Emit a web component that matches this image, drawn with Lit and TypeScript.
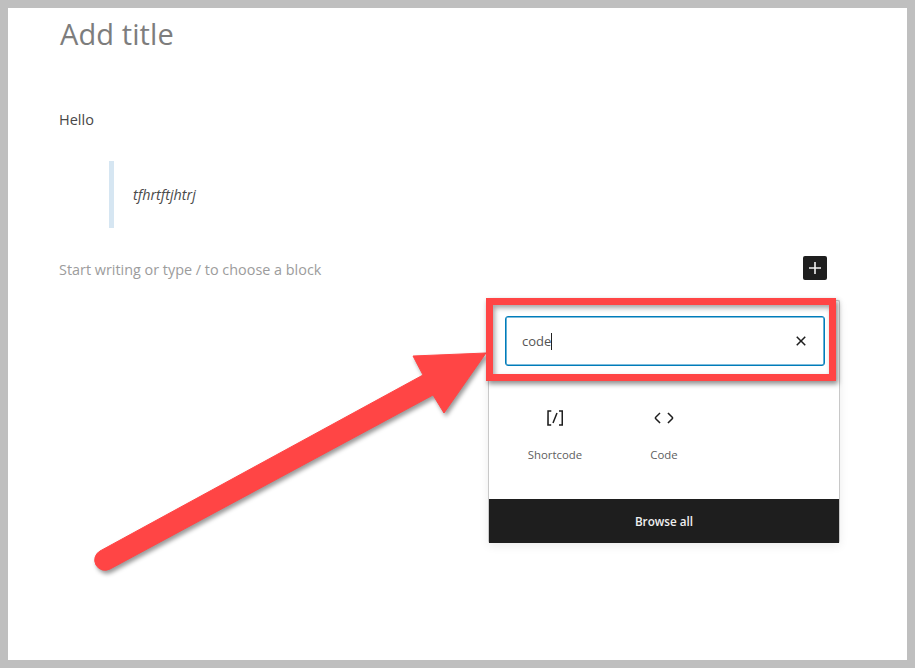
import { LitElement, html, css, svg } from "lit";
import { customElement } from "lit/decorators.js";

const ICONS = {
  plus: "M18 11.2h-5.2V6h-1.6v5.2H6v1.6h5.2V18h1.6v-5.2H18z",
  close: "M12 13.06l3.712 3.713 1.061-1.06L13.061 12l3.712-3.712-1.06-1.06L12 10.938 8.288 7.227l-1.061 1.06L10.939 12l-3.712 3.712 1.06 1.061L12 13.061z",
  shortcode: "M16 4.2v1.5h2.5v12.5H16v1.5h4V4.2h-4zM4.2 19.8h4v-1.5H5.8V5.8h2.5V4.2h-4l-.1 15.6zm5.1-3.1l1.4.6 4-10-1.4-.6-4 10z",
  code: "M20.8 10.7l-4.3-4.3-1.1 1.1 4.3 4.3c.1.1.1.3 0 .4l-4.3 4.3 1.1 1.1 4.3-4.3c.7-.8.7-1.9 0-2.6zM4.2 11.8l4.3-4.3-1-1-4.3 4.3c-.7.7-.7 1.8 0 2.5l4.3 4.3 1.1-1.1-4.3-4.3c-.2-.1-.2-.3-.1-.4z",
};

const icon = (d: string) =>
  html`<svg class="icon" viewBox="0 0 24 24" width="24" height="24" fill="currentColor">${svg`<path d=${d}></path>`}</svg>`;

@customElement("app-root")
export class AppRoot extends LitElement {
  static styles = css`
    :host {
      display: block;
      width: 915px;
      height: 668px;
      font-family: "Open Sans", "Noto Sans", sans-serif;
    }
    .frame {
      position: relative;
      box-sizing: border-box;
      width: 915px;
      height: 668px;
      border: 8px solid #bfbfbf;
      background: #fff;
      overflow: hidden;
      display: flex;
      flex-direction: column;
      padding: 0 80px 0 51px;
    }
    .title {
      margin: 7px 0 0 1px;
      font-size: 29px;
      line-height: 38px;
      font-weight: 400;
      color: #7d7d7d;
      letter-spacing: 0.1px;
    }
    .hello {
      margin: 55px 0 0;
      font-size: 14.5px;
      line-height: 24px;
      color: #484848;
    }
    .quote {
      margin: 29px 0 0 50px;
      height: 67px;
      border-left: 5px solid #d6e6f2;
      padding-left: 19px;
      display: flex;
      align-items: center;
      font-style: italic;
      font-size: 14.3px;
      color: #4a4a4a;
    }
    .placeholder-row {
      margin-top: 28px;
      display: flex;
      align-items: center;
      justify-content: space-between;
      height: 24px;
    }
    .placeholder {
      padding-top: 2px;
      font-size: 14.4px;
      color: #9c9c9c;
    }
    .add {
      width: 24px;
      height: 24px;
      border-radius: 2px;
      background: #1e1e1e;
      color: #f0f0f0;
      display: flex;
    }
    .popup {
      position: absolute;
      left: 480px;
      top: 292px;
      width: 352px;
      height: 243px;
      box-sizing: border-box;
      background: #fff;
      border: 1px solid #c8c8c8;
      border-bottom: 0;
      border-radius: 2px;
      box-shadow: 0 3px 10px rgba(0, 0, 0, 0.08);
      display: flex;
      flex-direction: column;
    }
    .search {
      margin: 15px 14px 0 16px;
      height: 50px;
      box-sizing: border-box;
      border: 1px solid #007cba;
      box-shadow: inset 0 0 0 0.6px #007cba;
      border-radius: 3px;
      display: flex;
      align-items: center;
      justify-content: space-between;
      padding: 0 11px 0 16px;
      font-size: 13px;
      color: #555;
    }
    .typed {
      display: flex;
      align-items: center;
    }
    .caret {
      width: 1px;
      height: 17px;
      background: #222;
    }
    .search .icon {
      color: #1e1e1e;
    }
    .results {
      display: grid;
      grid-template-columns: repeat(3, 109px);
      padding: 40px 0 0 11.5px;
      flex: 1;
      align-content: start;
    }
    .item {
      display: flex;
      flex-direction: column;
      align-items: center;
      gap: 17px;
      font-size: 11.4px;
      line-height: 16px;
      color: #606060;
    }
    .item .icon {
      color: #1e1e1e;
    }
    .browse {
      height: 44px;
      background: #1e1e1e;
      color: #f0f0f0;
      display: flex;
      align-items: center;
      justify-content: center;
      font-size: 11.7px;
      font-weight: 600;
    }
    .highlight {
      position: absolute;
      left: 478px;
      top: 290px;
      width: 350px;
      height: 83px;
      box-sizing: border-box;
      border: 7px solid #ff4545;
      box-shadow: 2px 3px 5px rgba(0, 0, 0, 0.45), inset 2px 3px 5px rgba(0, 0, 0, 0.35);
    }
    .arrow {
      position: absolute;
      left: -8px;
      top: -8px;
      filter: drop-shadow(2px 3px 2px rgba(0, 0, 0, 0.4));
    }
  `;

  render() {
    return html`
      <div class="frame">
        <h1 class="title">Add title</h1>
        <p class="hello">Hello</p>
        <blockquote class="quote">tfhrtftjhtrj</blockquote>
        <div class="placeholder-row">
          <span class="placeholder">Start writing or type / to choose a block</span>
          <span class="add">${icon(ICONS.plus)}</span>
        </div>
        <div class="popup">
          <div class="search">
            <span class="typed">code<span class="caret"></span></span>
            ${icon(ICONS.close)}
          </div>
          <div class="results">
            <div class="item">${icon(ICONS.shortcode)}<span>Shortcode</span></div>
            <div class="item">${icon(ICONS.code)}<span>Code</span></div>
          </div>
          <div class="browse">Browse all</div>
        </div>
        <svg class="arrow" width="915" height="668" viewBox="0 0 915 668">
          <path fill="#ff4545" stroke="#ff4545" stroke-linejoin="round" stroke-width="1"
            d="M486 353 L413 356 L423 375 L100 551 A10 10 0 0 0 110 569 L433 395 L444 413 Z"></path>
        </svg>
        <div class="highlight"></div>
      </div>
    `;
  }
}
